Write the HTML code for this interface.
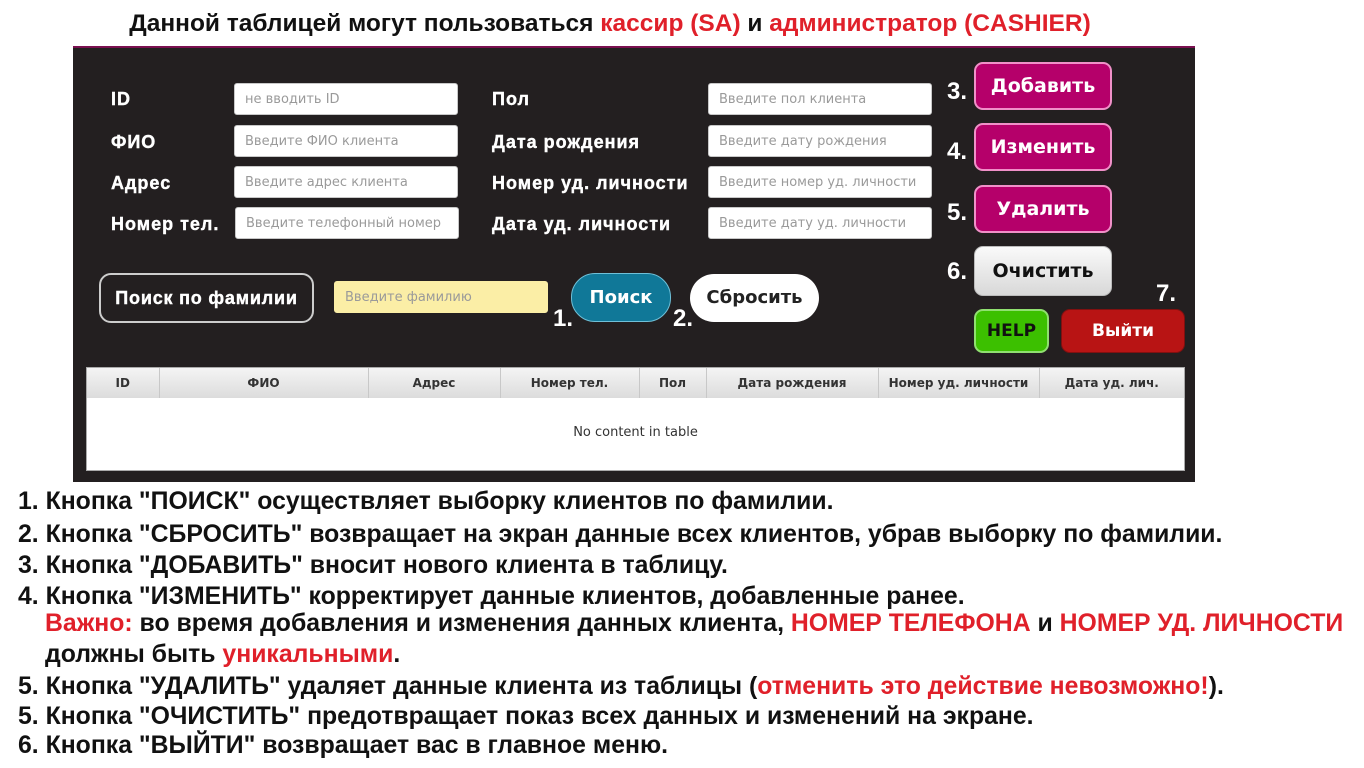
<!DOCTYPE html><html><head><meta charset="utf-8"><style>
*{margin:0;padding:0;box-sizing:border-box}
body{width:1364px;height:768px;background:#fff;position:relative;overflow:hidden;font-family:"Liberation Sans",sans-serif}
.a{position:absolute;white-space:nowrap}
.title{left:0;width:1220px;text-align:center;top:10px;font-weight:bold;font-size:24.5px;color:#111}
.r{color:#e0202a}
.panel{left:73px;top:46px;width:1122px;height:436px;background:#231f20;border-top:2px solid #7a1050}
.lbl{color:#fff;font-weight:bold;font-size:18px;letter-spacing:1px;-webkit-text-stroke:0.4px #fff}
.inp{background:#fff;border:1px solid #c8c8c8;border-radius:3px;height:32px;width:224px;color:#9a9a9a;padding:8px 10px;font-family:"DejaVu Sans",sans-serif;font-size:13px}
.btn{border-radius:9px;font-weight:bold;font-size:19px;text-align:center;font-family:"DejaVu Sans",sans-serif}
.pk{background:#b5006a;border:2px solid #f090c8;color:#fff;width:138px;height:48px;line-height:44px;left:974px}
.num{color:#fff;font-weight:bold;font-size:24px;font-family:"Liberation Sans Narrow","Liberation Sans",sans-serif}
.list{left:18px;font-family:"Liberation Sans Narrow","Liberation Sans",sans-serif;font-weight:bold;font-size:24.8px;color:#111}
table{border-collapse:collapse}
</style></head><body>
<div class="a title">Данной таблицей могут пользоваться <span class="r">кассир (SA)</span> и <span class="r">администратор (CASHIER)</span></div>
<div class="a panel"></div>
<div class="a lbl" style="left:111px;top:89px">ID</div>
<div class="a lbl" style="left:111px;top:132px">ФИО</div>
<div class="a lbl" style="left:111px;top:173px">Адрес</div>
<div class="a lbl" style="left:111px;top:214px">Номер тел.</div>
<div class="a inp" style="left:234px;top:83px">не вводить ID</div>
<div class="a inp" style="left:234px;top:125px">Введите ФИО клиента</div>
<div class="a inp" style="left:234px;top:166px">Введите адрес клиента</div>
<div class="a inp" style="left:235px;top:207px">Введите телефонный номер</div>
<div class="a lbl" style="left:492px;top:89px">Пол</div>
<div class="a lbl" style="left:492px;top:132px">Дата рождения</div>
<div class="a lbl" style="left:492px;top:173px">Номер уд. личности</div>
<div class="a lbl" style="left:492px;top:214px">Дата уд. личности</div>
<div class="a inp" style="left:708px;top:83px">Введите пол клиента</div>
<div class="a inp" style="left:708px;top:125px">Введите дату рождения</div>
<div class="a inp" style="left:708px;top:166px">Введите номер уд. личности</div>
<div class="a inp" style="left:708px;top:207px">Введите дату уд. личности</div>
<div class="a num" style="left:947px;top:78px">3.</div>
<div class="a num" style="left:947px;top:138px">4.</div>
<div class="a num" style="left:947px;top:199px">5.</div>
<div class="a num" style="left:947px;top:258px">6.</div>
<div class="a num" style="left:1156px;top:280px">7.</div>
<div class="a num" style="left:553px;top:305px">1.</div>
<div class="a num" style="left:673px;top:305px">2.</div>
<div class="a btn pk" style="top:62px">Добавить</div>
<div class="a btn pk" style="top:123px">Изменить</div>
<div class="a btn pk" style="top:185px">Удалить</div>
<div class="a btn" style="left:974px;top:246px;width:138px;height:50px;line-height:48px;background:linear-gradient(#fafafa,#d8d8d8);border:1px solid #bbb;color:#111">Очистить</div>
<div class="a btn" style="left:974px;top:309px;width:75px;height:44px;line-height:40px;background:#3cc000;border:2px solid #90e070;color:#111;font-size:17px">HELP</div>
<div class="a btn" style="left:1061px;top:309px;width:124px;height:44px;line-height:42px;background:#b81414;border:1px solid #801010;color:#fff;font-size:17px">Выйти</div>
<div class="a lbl" style="left:99px;top:273px;width:215px;height:50px;border:2px solid #ccc;border-radius:12px;line-height:46px;text-align:center;letter-spacing:0.8px">Поиск по фамилии</div>
<div class="a inp" style="left:334px;top:281px;width:214px;background:#fbeea6;border-color:#fbeea6">Введите фамилию</div>
<div class="a btn" style="left:571px;top:273px;width:100px;height:49px;line-height:47px;background:#107898;border:1px solid #6fc0d8;border-radius:24px;color:#fff;font-size:18px">Поиск</div>
<div class="a btn" style="left:690px;top:274px;width:129px;height:48px;line-height:48px;background:#fff;border-radius:24px;color:#222;font-size:18px">Сбросить</div>
<div class="a" style="left:86px;top:367px;width:1099px;height:104px;background:#fff;border:1px solid #aaa">
<table style="width:1097px;font-family:'DejaVu Sans',sans-serif;font-size:12px;font-weight:bold;color:#333">
<tr style="height:30px;background:linear-gradient(#f4f4f4,#dcdcdc)">
<td style="width:72px;text-align:center;border-right:1px solid #c8c8c8">ID</td>
<td style="width:209px;text-align:center;border-right:1px solid #c8c8c8">ФИО</td>
<td style="width:132px;text-align:center;border-right:1px solid #c8c8c8">Адрес</td>
<td style="width:139px;text-align:center;border-right:1px solid #c8c8c8">Номер тел.</td>
<td style="width:67px;text-align:center;border-right:1px solid #c8c8c8">Пол</td>
<td style="width:172px;text-align:center;border-right:1px solid #c8c8c8">Дата рождения</td>
<td style="width:161px;text-align:center;border-right:1px solid #c8c8c8">Номер уд. личности</td>
<td style="text-align:center">Дата уд. лич.</td></tr></table>
<div style="text-align:center;margin-top:27px;font-family:'DejaVu Sans',sans-serif;font-size:13px;color:#333">No content in table</div>
</div>
<div class="a list" style="top:488px">1. Кнопка "ПОИСК" осуществляет выборку клиентов по фамилии.</div>
<div class="a list" style="top:521px">2. Кнопка "СБРОСИТЬ" возвращает на экран данные всех клиентов, убрав выборку по фамилии.</div>
<div class="a list" style="top:552px">3. Кнопка "ДОБАВИТЬ" вносит нового клиента в таблицу.</div>
<div class="a list" style="top:583px">4. Кнопка "ИЗМЕНИТЬ" корректирует данные клиентов, добавленные ранее.</div>
<div class="a list" style="top:610px;left:45px"><span class="r">Важно:</span> во время добавления и изменения данных клиента, <span class="r">НОМЕР ТЕЛЕФОНА</span> и <span class="r">НОМЕР УД. ЛИЧНОСТИ</span></div>
<div class="a list" style="top:641px;left:45px">должны быть <span class="r">уникальными</span>.</div>
<div class="a list" style="top:673px">5. Кнопка "УДАЛИТЬ" удаляет данные клиента из таблицы (<span class="r">отменить это действие невозможно!</span>).</div>
<div class="a list" style="top:703px">5. Кнопка "ОЧИСТИТЬ" предотвращает показ всех данных и изменений на экране.</div>
<div class="a list" style="top:732px">6. Кнопка "ВЫЙТИ" возвращает вас в главное меню.</div>
</body></html>
